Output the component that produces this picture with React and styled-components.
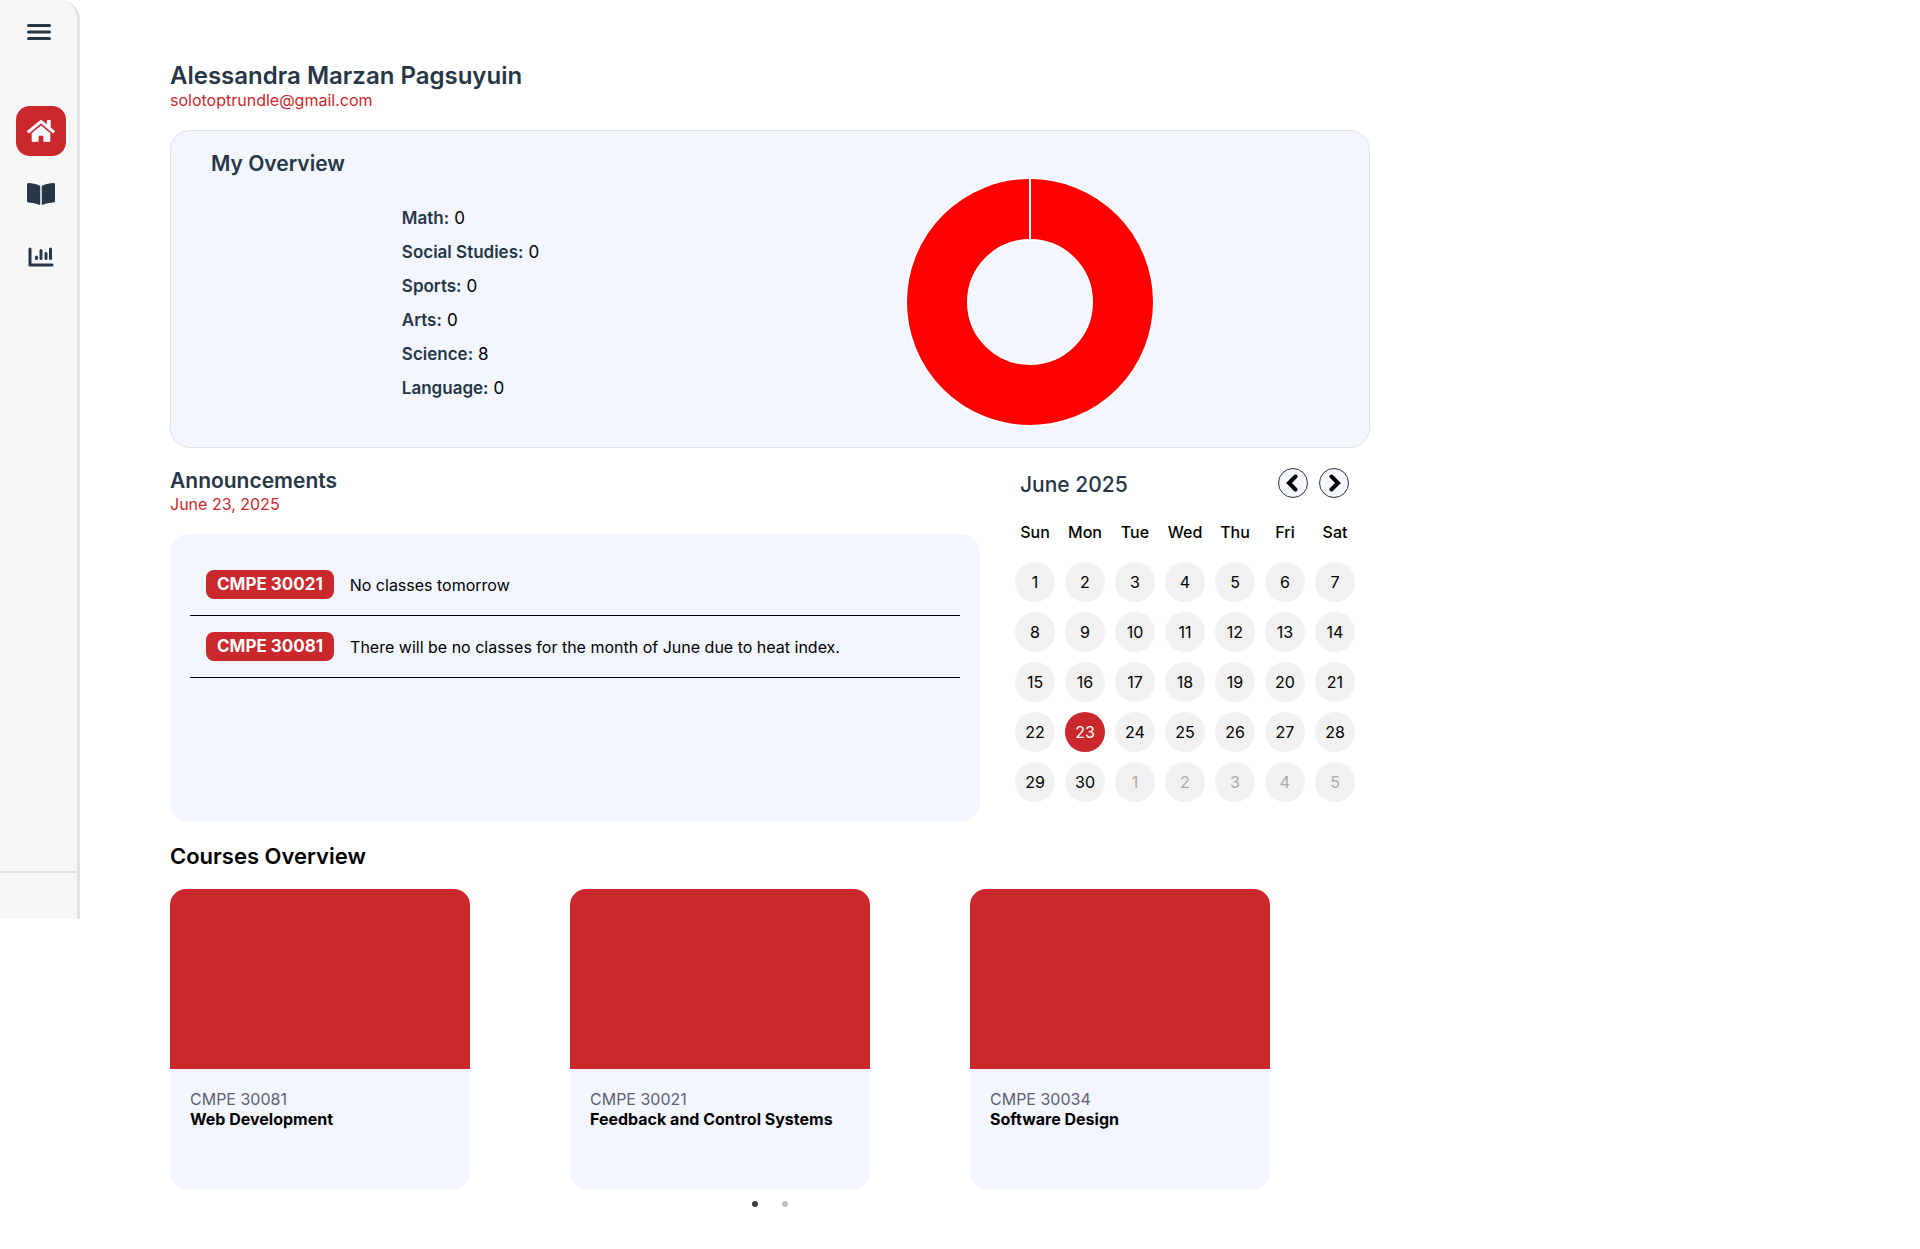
import React from "react";
import styled, { createGlobalStyle, css } from "styled-components";
import { FaHome, FaBookOpen } from "react-icons/fa";

const navy = "#273646";
const red = "#cb282d";
const tint = "#f3f6ff";

const GlobalStyle = createGlobalStyle`
  *, *::before, *::after { box-sizing: border-box; }
  body {
    margin: 0;
    background: #fff;
    color: #000;
    font-family: Inter, "Liberation Sans", sans-serif;
    font-size: 16px;
    line-height: 20px;
  }
  h1, h2, h3, p, ul, dl, dd { margin: 0; padding: 0; }
  ul { list-style: none; }
  button { font: inherit; padding: 0; border: 0; background: none; cursor: pointer; }
`;

const Page = styled.div`
  display: flex;
  align-items: flex-start;
  gap: 90px;
  min-height: 100vh;
`;

const Sidebar = styled.aside`
  display: flex;
  flex-direction: column;
  flex: none;
  width: 80px;
  min-height: 919px;
  background: #f7f7f7;
  border-right: 3px solid #e2e2e2;
  border-top-right-radius: 20px;
`;

const MenuButton = styled.button`
  display: flex;
  margin: 20px 0 0 27px;
  width: 24px;
  height: 24px;
  align-items: center;
  color: ${navy};
`;

const Nav = styled.nav`
  display: flex;
  flex: 1;
  flex-direction: column;
  gap: 13px;
  padding: 62px 0 0 16px;
`;

const NavLink = styled.a`
  display: flex;
  align-items: center;
  justify-content: center;
  width: 50px;
  height: 50px;
  border-radius: 14px;
  color: ${(p) => (p.$active ? tint : navy)};
  background: ${(p) => (p.$active ? red : "transparent")};
`;

const SidebarFooter = styled.div`
  height: 48px;
  border-top: 2px solid #e2e2e2;
`;

const Main = styled.main`
  flex: 1;
  max-width: 1200px;
  padding-top: 62px;
`;

const UserName = styled.h1`
  color: ${navy};
  font-size: 24px;
  font-weight: 600;
  line-height: 28px;
`;

const Accent = styled.p`
  color: ${red};
`;

const Heading = styled.h2`
  color: ${navy};
  font-size: 21px;
  font-weight: 600;
  line-height: 26px;
`;

const MonthHeading = styled(Heading)`
  font-weight: 500;
`;

const CoursesHeading = styled(Heading)`
  color: #000;
  font-size: 22px;
`;

const Overview = styled.section`
  margin-top: 20px;
  padding: 20px 60px 20px 20px;
  background: ${tint};
  border: 1px solid #e2e2e2;
  border-radius: 20px;
  ${Heading} { padding-left: 20px; }
`;

const OverviewBody = styled.div`
  display: grid;
  grid-template-columns: 1fr 1fr;
  justify-items: center;
`;

const Scores = styled.dl`
  display: flex;
  flex-direction: column;
  gap: 12px;
  padding-top: 30px;
`;

const Score = styled.div`
  display: flex;
  gap: 5px;
  font-size: 17px;
  line-height: 22px;
  dt { color: ${navy}; font-weight: 600; }
`;

const Columns = styled.div`
  display: grid;
  grid-template-columns: 1fr 350px;
  gap: 30px;
  padding: 20px 10px 0 0;
`;

const AnnouncementList = styled.ul`
  height: 288px;
  margin-top: 20px;
  padding: 20px;
  background: ${tint};
  border-radius: 20px;
`;

const Announcement = styled.li`
  display: flex;
  align-items: center;
  gap: 16px;
  padding: 16px;
  border-bottom: 1px solid #000;
`;

const Badge = styled.span`
  padding: 4px 11px 5px;
  border-radius: 8px;
  background: ${red};
  color: #fff;
  font-size: 17px;
  font-weight: 700;
`;

const CalendarHeader = styled.div`
  display: flex;
  align-items: flex-end;
  justify-content: space-between;
  height: 30px;
  padding: 0 11px 0 10px;
`;

const MonthButtons = styled.div`
  display: flex;
  gap: 11px;
`;

const MonthButton = styled.button`
  display: flex;
  align-items: center;
  justify-content: center;
  width: 30px;
  height: 30px;
  border: 1px solid #333;
  border-radius: 50%;
  background: ${tint};
  color: #000;
`;

const CalendarTable = styled.table`
  width: 100%;
  margin-top: 13px;
  border-collapse: collapse;
  table-layout: fixed;
  th { padding: 0; height: 41px; font-weight: 500; }
  td { padding: 10px 0 0; }
`;

const Day = styled.span`
  display: flex;
  align-items: center;
  justify-content: center;
  width: 40px;
  height: 40px;
  margin: 0 auto;
  border-radius: 50%;
  background: #f1f1f1;
  ${(p) => p.$muted && css`color: #aaa;`}
  ${(p) => p.$today && css`background: ${red}; color: #fff;`}
`;

const Courses = styled.section`
  padding-top: 21px;
`;

const CourseRow = styled.div`
  display: grid;
  grid-template-columns: repeat(3, 1fr);
  margin-top: 20px;
`;

const Course = styled.article`
  width: 300px;
  height: 300px;
  border-radius: 16px;
  overflow: hidden;
  background: ${tint};
`;

const Cover = styled.div`
  height: 180px;
  background: ${red};
`;

const CourseInfo = styled.div`
  padding: 20px;
  p { color: #5f6075; }
  h3 { font-size: 16px; line-height: 20px; font-weight: 700; }
`;

const Dots = styled.div`
  display: flex;
  justify-content: center;
  gap: 10px;
  padding-top: 5px;
`;

const Dot = styled.button`
  display: flex;
  align-items: center;
  justify-content: center;
  width: 20px;
  height: 20px;
  &::before {
    content: "";
    width: 6px;
    height: 6px;
    border-radius: 50%;
    background: ${(p) => (p.$active ? "#404040" : "#bfbfbf")};
  }
`;

const scores = [["Math", 0], ["Social Studies", 0], ["Sports", 0], ["Arts", 0], ["Science", 8], ["Language", 0]];
const announcements = [
  ["CMPE 30021", "No classes tomorrow"],
  ["CMPE 30081", "There will be no classes for the month of June due to heat index."],
];
const weekdays = ["Sun", "Mon", "Tue", "Wed", "Thu", "Fri", "Sat"];
const courses = [
  ["CMPE 30081", "Web Development"],
  ["CMPE 30021", "Feedback and Control Systems"],
  ["CMPE 30034", "Software Design"],
];
const weeks = [0, 1, 2, 3, 4].map((w) => weekdays.map((_, d) => w * 7 + d + 1));

const MenuIcon = () => (
  <svg width="24" height="16" viewBox="0 0 24 16" aria-hidden="true">
    <path d="M1.5 1.5h21M1.5 8h21M1.5 14.5h21" stroke="currentColor" strokeWidth="3" strokeLinecap="round" />
  </svg>
);

const ChartIcon = () => (
  <svg width="26" height="20" viewBox="0 0 26 20" fill="none" stroke="currentColor" strokeLinecap="round" aria-hidden="true">
    <path d="M2 2V18H24" strokeWidth="3" strokeLinejoin="round" />
    <path d="M8.5 10V11.5M13 3.5V11.5M18 6.5V11.5M22.5 2V11.5" strokeWidth="3" />
  </svg>
);

const Chevron = ({ d }) => (
  <svg width="14" height="18" viewBox="0 0 14 18" fill="none" aria-hidden="true">
    <path d={d} stroke="currentColor" strokeWidth="4" strokeLinecap="round" />
  </svg>
);

const Donut = () => (
  <svg width="250" height="250" viewBox="0 0 250 250" role="img" aria-label="Science: 8">
    <circle cx="125" cy="125" r="93" fill="none" stroke="#fff" strokeWidth="64" />
    <circle cx="125" cy="125" r="93" fill="none" stroke="#f00" strokeWidth="60" />
    <path d="M125 1V63" stroke="#fff" strokeWidth="2" />
  </svg>
);

export default function App() {
  return (
    <>
      <GlobalStyle />
      <Page>
        <Sidebar>
          <MenuButton aria-label="Menu"><MenuIcon /></MenuButton>
          <Nav>
            <NavLink href="#home" aria-label="Home" $active><FaHome size={28} /></NavLink>
            <NavLink href="#courses" aria-label="Courses"><FaBookOpen size={28} /></NavLink>
            <NavLink href="#reports" aria-label="Reports"><ChartIcon /></NavLink>
          </Nav>
          <SidebarFooter />
        </Sidebar>
        <Main>
          <UserName>Alessandra Marzan Pagsuyuin</UserName>
          <Accent>solotoptrundle@gmail.com</Accent>
          <Overview>
            <Heading>My Overview</Heading>
            <OverviewBody>
              <Scores>
                {scores.map(([name, value]) => (
                  <Score key={name}><dt>{name}:</dt><dd>{value}</dd></Score>
                ))}
              </Scores>
              <Donut />
            </OverviewBody>
          </Overview>
          <Columns>
            <section>
              <Heading>Announcements</Heading>
              <Accent>June 23, 2025</Accent>
              <AnnouncementList>
                {announcements.map(([code, text]) => (
                  <Announcement key={code}><Badge>{code}</Badge><span>{text}</span></Announcement>
                ))}
              </AnnouncementList>
            </section>
            <section>
              <CalendarHeader>
                <MonthHeading>June 2025</MonthHeading>
                <MonthButtons>
                  <MonthButton aria-label="Previous month"><Chevron d="M9.5 2.5L3 9L9.5 15.5" /></MonthButton>
                  <MonthButton aria-label="Next month"><Chevron d="M4.5 2.5L11 9L4.5 15.5" /></MonthButton>
                </MonthButtons>
              </CalendarHeader>
              <CalendarTable>
                <thead>
                  <tr>{weekdays.map((d) => <th key={d} scope="col">{d}</th>)}</tr>
                </thead>
                <tbody>
                  {weeks.map((week) => (
                    <tr key={week[0]}>
                      {week.map((n) => (
                        <td key={n}><Day $today={n === 23} $muted={n > 30}>{n > 30 ? n - 30 : n}</Day></td>
                      ))}
                    </tr>
                  ))}
                </tbody>
              </CalendarTable>
            </section>
          </Columns>
          <Courses>
            <CoursesHeading>Courses Overview</CoursesHeading>
            <CourseRow>
              {courses.map(([code, name]) => (
                <Course key={code}>
                  <Cover />
                  <CourseInfo><p>{code}</p><h3>{name}</h3></CourseInfo>
                </Course>
              ))}
            </CourseRow>
            <Dots>
              <Dot aria-label="Slide 1" $active />
              <Dot aria-label="Slide 2" />
            </Dots>
          </Courses>
        </Main>
      </Page>
    </>
  );
}
